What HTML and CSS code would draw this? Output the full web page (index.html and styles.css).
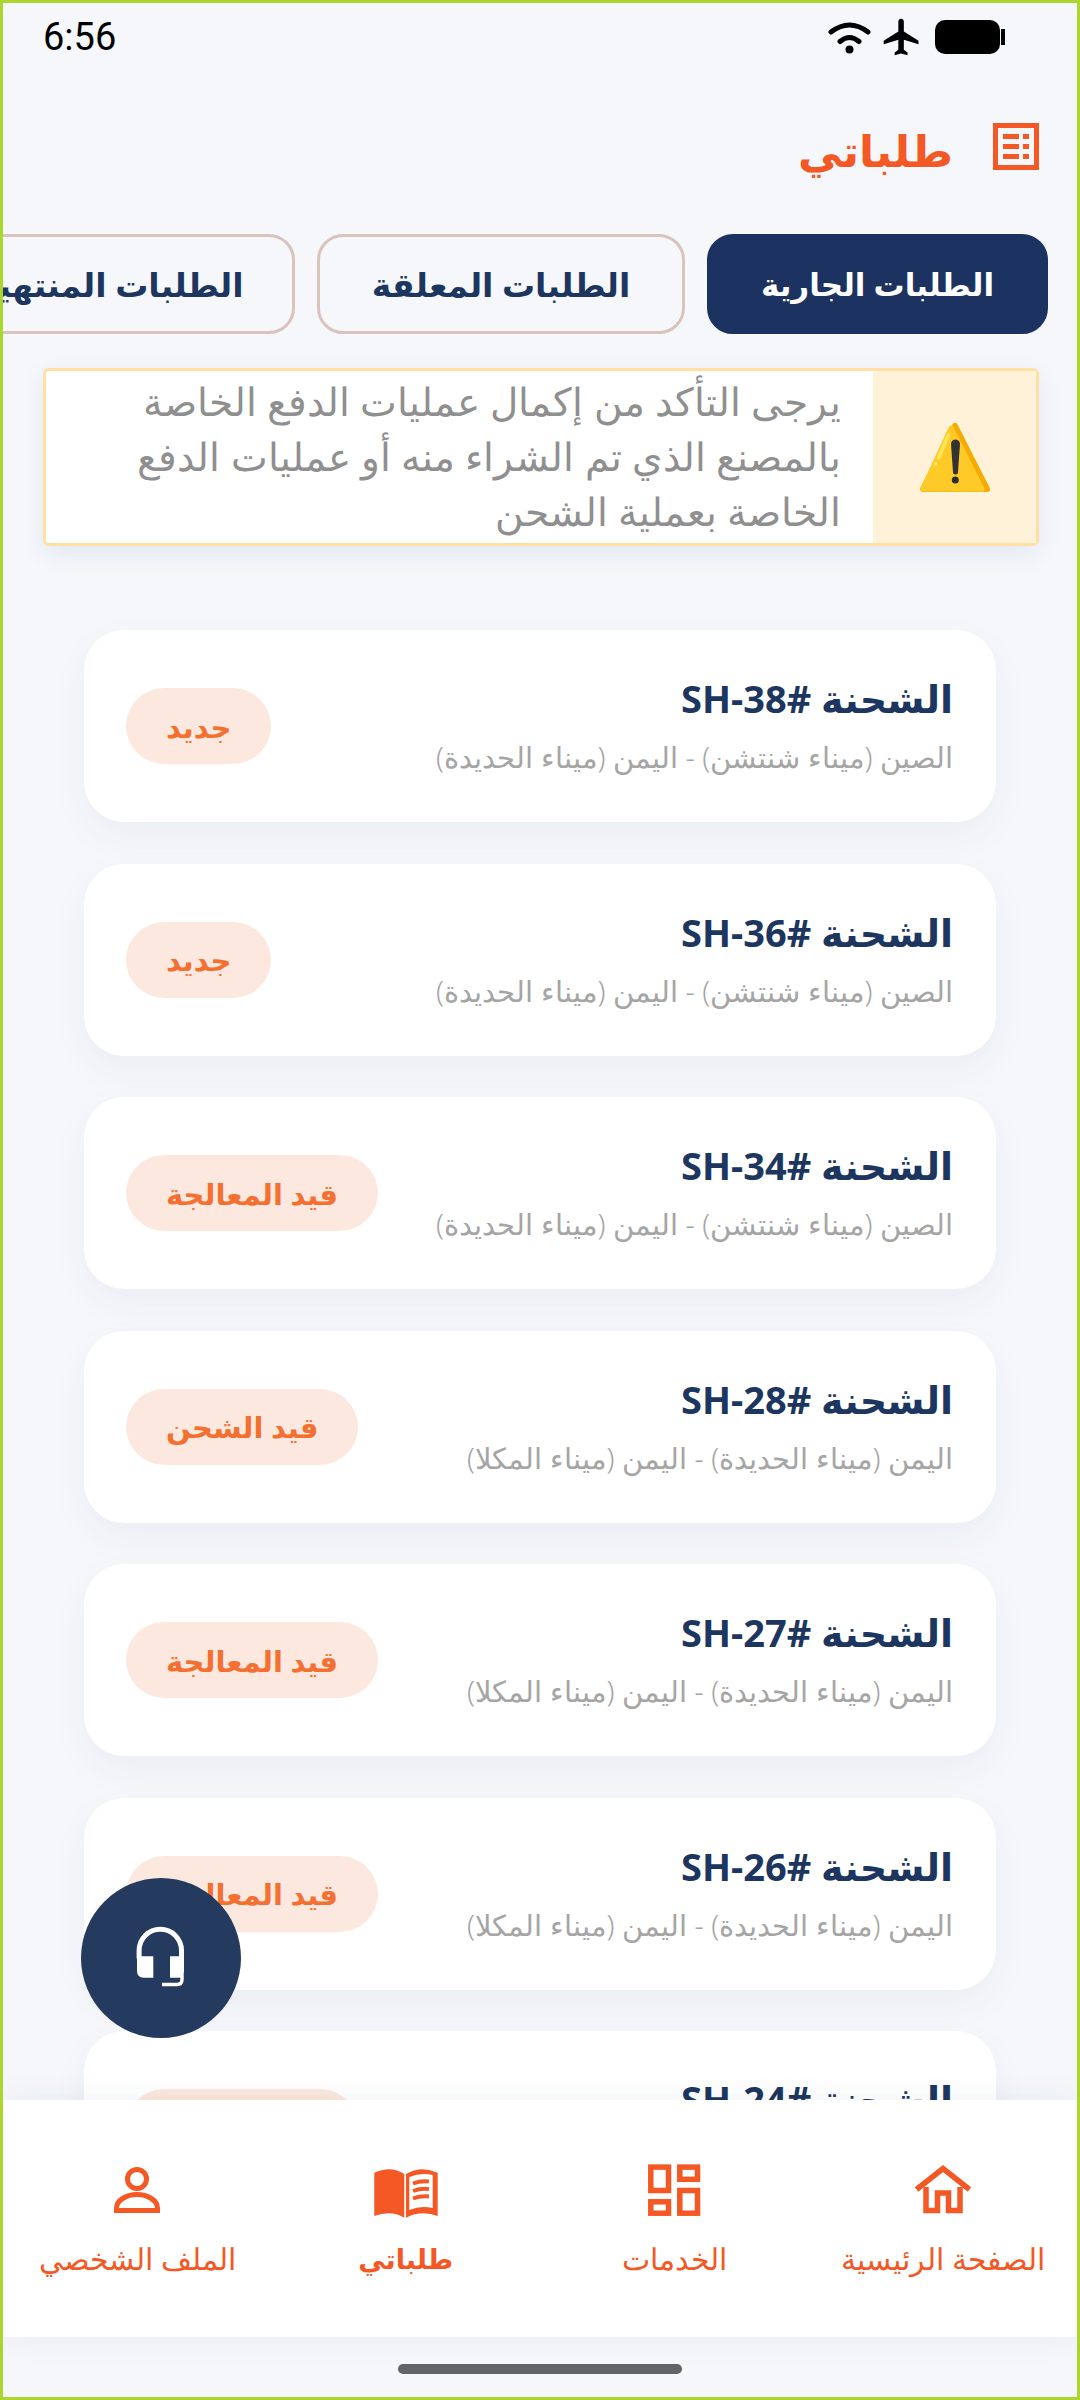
FILE: index.html
```html
<!DOCTYPE html>
<html lang="ar" dir="rtl">
<head>
    <meta charset="UTF-8">
    <meta name="viewport" content="width=device-width, initial-scale=1.0">
    <title>طلباتي</title>
    <link rel="stylesheet" href="styles.css">
</head>
<body>
    <div class="screen">
        <div class="status-bar" dir="ltr">
            <span class="time">6:56</span>
            <div class="status-icons">
                <svg width="43" height="33" viewBox="0 0 43 33"><path d="M3 11Q21.500-3 40 11M12 20.500Q21.500 12.500 31 20.500" fill="none" stroke="#000" stroke-width="5" stroke-linecap="round"/><circle cx="21.500" cy="28.500" r="4" fill="#000"/></svg>
                <svg width="44" height="44" viewBox="0 0 24 24"><path d="M21 16v-2l-8-5V3.500c0-.83-.67-1.500-1.500-1.500S10 2.670 10 3.500V9l-8 5v2l8-2.500V19l-2 1.500V22l3.500-1 3.500 1v-1.500L13 19v-5.500l8 2.500z" fill="#000"/></svg>
                <div class="battery"></div>
            </div>
        </div>

        <div class="page-header">
            <svg width="46" height="47" viewBox="0 0 46 47" fill="#f35825"><rect x="2.500" y="2.500" width="41" height="42" fill="none" stroke="#f35825" stroke-width="5"/><rect x="10" y="11" width="16" height="5"/><rect x="30" y="11" width="6" height="5"/><rect x="10" y="21" width="16" height="5"/><rect x="30" y="21" width="6" height="5"/><rect x="10" y="31" width="16" height="5"/><rect x="30" y="31" width="6" height="5"/></svg>
            <h1 class="page-title">طلباتي</h1>
        </div>

        <div class="tabs">
            <div class="tab active">الطلبات الجارية</div>
            <div class="tab">الطلبات المعلقة</div>
            <div class="tab">الطلبات المنتهية</div>
        </div>

        <div class="notice">
            <div class="notice-icon">
                <svg width="70" height="69" viewBox="0 0 70 69"><path d="M35 3L67 66H3z" fill="#f5ab00" stroke="#f5ab00" stroke-width="6" stroke-linejoin="round"/><path d="M31 5L3 66H62z" fill="#ffca28" stroke="#ffca28" stroke-width="5" stroke-linejoin="round"/><path d="M28.500 12L18.500 35" stroke="#ffe55a" stroke-width="3.500" stroke-linecap="round"/><circle cx="15.500" cy="41" r="2" fill="#ffe55a"/><path d="M31 21a4.500 4.500 0 0 1 9 0l-2 28a2.500 2.500 0 0 1-5 0z" fill="#333"/><circle cx="35.300" cy="57" r="3.500" fill="#2b2b2b"/></svg>
            </div>
            <p class="notice-text">يرجى التأكد من إكمال عمليات الدفع الخاصة بالمصنع الذي تم الشراء منه أو عمليات الدفع الخاصة بعملية الشحن</p>
        </div>

        <div class="orders">
            <div class="order-card">
                <div><div class="order-title">الشحنة #SH-38</div><div class="order-route">الصين (ميناء شنتشن) - اليمن (ميناء الحديدة)</div></div>
                <span class="badge">جديد</span>
            </div>
            <div class="order-card">
                <div><div class="order-title">الشحنة #SH-36</div><div class="order-route">الصين (ميناء شنتشن) - اليمن (ميناء الحديدة)</div></div>
                <span class="badge">جديد</span>
            </div>
            <div class="order-card">
                <div><div class="order-title">الشحنة #SH-34</div><div class="order-route">الصين (ميناء شنتشن) - اليمن (ميناء الحديدة)</div></div>
                <span class="badge">قيد المعالجة</span>
            </div>
            <div class="order-card">
                <div><div class="order-title">الشحنة #SH-28</div><div class="order-route">اليمن (ميناء الحديدة) - اليمن (ميناء المكلا)</div></div>
                <span class="badge">قيد الشحن</span>
            </div>
            <div class="order-card">
                <div><div class="order-title">الشحنة #SH-27</div><div class="order-route">اليمن (ميناء الحديدة) - اليمن (ميناء المكلا)</div></div>
                <span class="badge">قيد المعالجة</span>
            </div>
            <div class="order-card">
                <div><div class="order-title">الشحنة #SH-26</div><div class="order-route">اليمن (ميناء الحديدة) - اليمن (ميناء المكلا)</div></div>
                <span class="badge">قيد المعالجة</span>
            </div>
            <div class="order-card">
                <div><div class="order-title">الشحنة #SH-24</div><div class="order-route">اليمن (ميناء الحديدة) - اليمن (ميناء المكلا)</div></div>
                <span class="badge">قيد الشحن</span>
            </div>
        </div>

        <div class="support-btn">
            <svg width="90" height="90" viewBox="-4 -1.500 90 90"><path d="M19.100 44V36a21.200 21.200 0 0 1 42.400 0V44" fill="none" stroke="#fff" stroke-width="5"/><path d="M17 41.700H33.300V63.300H24Q17 63.300 17 56z" fill="#fff"/><path d="M50 41.700H64V57Q64 63.300 58 63.300H50z" fill="#fff"/><path d="M42 70H57Q62 70 62 65V60" fill="none" stroke="#fff" stroke-width="3.500"/></svg>
        </div>

        <nav class="bottom-nav">
            <div class="nav-item">
                <svg width="90" height="80" viewBox="0 0 90 80" fill="none" stroke="#f35825" stroke-width="5.500"><path d="M18.500 39.500L45 18.500L71.500 39.500"/><path d="M28 37V60.500H39.500V43H50.500V60.500H62V37"/></svg>
                <span>الصفحة الرئيسية</span>
            </div>
            <div class="nav-item">
                <svg width="90" height="80" viewBox="0 0 90 80" fill="none" stroke="#f35825" stroke-width="5.500"><rect x="21.800" y="17.100" width="17.700" height="23.400"/><rect x="50.800" y="17.100" width="17.700" height="12.200"/><rect x="50.800" y="40.500" width="17.700" height="22.700"/><rect x="21.800" y="51.800" width="17.700" height="11.400"/></svg>
                <span>الخدمات</span>
            </div>
            <div class="nav-item current">
                <svg width="90" height="80" viewBox="0 0 90 80"><path d="M13.300 22.700Q30 15 43.300 24V67.700Q30 60 13.300 66z" fill="#f35825"/><path d="M45 24Q60 15 76.700 22.700V66Q60 60 45 67.700z" fill="#f35825"/><path d="M48.300 27Q60 22 71.700 25V58Q60 55 48.300 60z" fill="#fff"/><path d="M52 33.500Q60 30.500 68 31.500M52 41Q60 38 68 39M52 48.500Q60 45.500 68 46.500" fill="none" stroke="#f35825" stroke-width="4"/></svg>
                <span>طلباتي</span>
            </div>
            <div class="nav-item">
                <svg width="90" height="80" viewBox="0 0 90 80" fill="none" stroke="#f35825" stroke-width="5"><circle cx="45" cy="29" r="9.500"/><path d="M24.500 60.500V58C24.500 50 35 44.500 45 44.500S65.500 50 65.500 58V60.500z"/></svg>
                <span>الملف الشخصي</span>
            </div>
        </nav>

        <div class="home-bar"><div class="home-pill"></div></div>
    </div>
</body>
</html>
```

FILE: styles.css
```css
html,body{
    margin:0px;
    padding:0px;
}
body{
    width:1080px;
    height:2400px;
    font-family:"Noto Sans","DejaVu Sans",sans-serif;
}
.screen{
    position:relative;
    box-sizing:border-box;
    width:1080px;
    height:2400px;
    border:3px solid #aad62e;
    background-color:#f5f7fb;
    display:flex;
    flex-direction:column;
    overflow:hidden;
}
.status-bar{
    height:68px;
    flex:none;
    display:flex;
    justify-content:space-between;
    align-items:center;
    padding:0 77px 0 40px;
}
.time{
    font-family:Roboto,sans-serif;
    font-size:38px;
    color:#000;
}
.status-icons{
    display:flex;
    align-items:center;
    gap:9px;
}
.battery{
    position:relative;
    width:65px;
    height:34px;
    margin-left:2px;
    background-color:#000;
    border-radius:10px;
}
.battery::after{
    content:"";
    position:absolute;
    left:66px;
    top:9px;
    width:4px;
    height:16px;
    background-color:#000;
}
.page-header{
    height:151px;
    flex:none;
    display:flex;
    align-items:center;
    gap:40px;
    padding-right:38px;
}
.page-title{
    margin:0;
    padding-top:6px;
    font-size:44px;
    font-weight:600;
    color:#f35825;
}
.tabs{
    flex:none;
    margin-top:12px;
    display:flex;
    gap:22px;
    padding-right:29px;
    overflow:hidden;
}
.tab{
    flex:none;
    box-sizing:border-box;
    height:100px;
    width:368px;
    display:flex;
    align-items:center;
    justify-content:center;
    border:3px solid #d9c4bd;
    border-radius:26px;
    font-size:33px;
    font-weight:700;
    color:#1c3660;
}
.tab.active{
    width:341px;
    font-size:31px;
    background-color:#1c3260;
    border-color:#1c3260;
    color:#fff;
}
.notice{
    flex:none;
    box-sizing:border-box;
    height:178px;
    margin:34px 38px 0 40px;
    display:flex;
    background-color:#fff;
    border:3px solid #ffdfa3;
    border-radius:6px;
    box-shadow:0 8px 24px rgba(30,50,90,.08);
}
.notice-icon{
    width:163px;
    flex:none;
    display:flex;
    align-items:center;
    justify-content:center;
    background-color:#fff2d9;
}
.notice-text{
    margin:0;
    padding:3px 32px 0 54px;
    font-size:39.3px;
    font-weight:300;
    line-height:55px;
    color:#8f8f8f;
}
.orders{
    flex:1;
    min-height:0;
    overflow:hidden;
    padding:84px 81px 40px;
    display:flex;
    flex-direction:column;
    gap:41.5px;
}
.order-card{
    flex:none;
    box-sizing:border-box;
    height:192px;
    padding:0 43px 0 42px;
    display:flex;
    justify-content:space-between;
    align-items:center;
    background-color:#fff;
    border-radius:40px;
    box-shadow:0 14px 36px rgba(30,50,90,.05);
}
.order-title{
    margin-top:-4px;
    font-size:38px;
    font-weight:700;
    color:#1c3660;
}
.order-route{
    margin-top:13px;
    font-size:28.7px;
    font-weight:300;
    color:#a5a5a5;
}
.badge{
    box-sizing:border-box;
    height:76px;
    padding:0 40px;
    display:flex;
    align-items:center;
    border-radius:38px;
    background-color:#fce8de;
    font-size:29px;
    font-weight:700;
    color:#f56f30;
}
.support-btn{
    position:absolute;
    left:78px;
    top:1875px;
    width:160px;
    height:160px;
    border-radius:50%;
    background-color:#243a5e;
    display:flex;
    align-items:center;
    justify-content:center;
}
.bottom-nav{
    position:relative;
    height:237px;
    flex:none;
    display:grid;
    grid-template-columns:repeat(4,1fr);
    background-color:#fff;
    box-shadow:0 0 30px rgba(30,50,90,.07);
}
.nav-item{
    display:flex;
    flex-direction:column;
    align-items:center;
    padding-top:50px;
    color:#f35825;
    font-size:30px;
    font-weight:300;
}
.nav-item span{
    margin-top:8px;
    white-space:nowrap;
}
.nav-item.current span{
    margin-top:10px;
    font-size:27px;
    font-weight:700;
}
.home-bar{
    height:60px;
    flex:none;
    display:flex;
    justify-content:center;
    padding-top:27px;
    box-sizing:border-box;
}
.home-pill{
    width:284px;
    height:10px;
    border-radius:5px;
    background-color:#636466;
}
```
